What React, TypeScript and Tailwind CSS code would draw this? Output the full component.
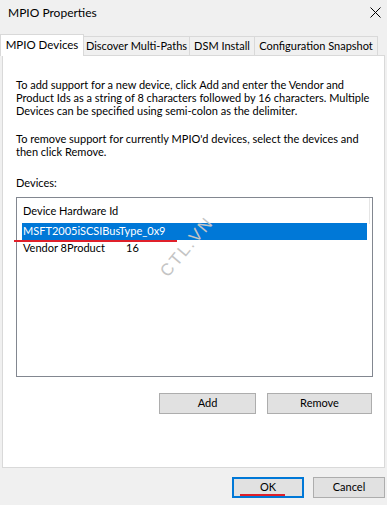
const tabs = [
  { label: 'Discover Multi-Paths', w: 'w-[107px]' },
  { label: 'DSM Install', w: 'w-[66px]' },
  { label: 'Configuration Snapshot', w: 'w-[124px]' },
]

const App = () => {
  return (
    <div
      className="relative h-[505px] w-[387px] overflow-hidden bg-[#f0f0f0] text-[11px] text-black"
      style={{ fontFamily: 'Lato, "Liberation Sans", sans-serif' }}
    >
      {/* title bar */}
      <div className="flex h-[25px] items-center justify-between pl-[8px] pr-[4px]">
        <span className="text-[12px] leading-none">MPIO Properties</span>
        <svg width="11" height="11" viewBox="0 0 11 11" className="mr-[2px]">
          <path d="M0.5 0.5 L10.5 10.5 M10.5 0.5 L0.5 10.5" stroke="#000" strokeWidth="1" />
        </svg>
      </div>

      {/* tabs */}
      <div className="mt-[9px] flex h-[21px] items-end whitespace-nowrap">
        <div className="relative z-10 -mb-px flex h-[22px] w-[84px] items-center justify-center border border-b-0 border-[#d9d9d9] bg-white pb-[1px] text-[11.5px]">
          MPIO Devices
        </div>
        {tabs.map((t) => (
          <div
            key={t.label}
            className={`-ml-px flex h-[19px] items-center justify-center border border-b-0 border-[#d9d9d9] bg-[#f0f0f0] ${t.w}`}
          >
            {t.label}
          </div>
        ))}
      </div>

      {/* panel */}
      <div className="ml-[2px] flex h-[413px] w-[383px] flex-col border border-[#d9d9d9] bg-white pl-[13px] pr-[11px] pt-[22px]">
        <p className="whitespace-nowrap leading-[13px]">
          To add support for a new device, click Add and enter the Vendor and
          <br />
          Product Ids as a string of 8 characters followed by 16 characters. Multiple
          <br />
          Devices can be specified using semi-colon as the delimiter.
        </p>
        <p className="mt-[15px] whitespace-nowrap leading-[13px]">
          To remove support for currently MPIO'd devices, select the devices and
          <br />
          then click Remove.
        </p>
        <p className="mt-[18px] leading-[13px]">Devices:</p>

        {/* list box */}
        <div className="relative mt-[8px] h-[180px] w-[357px] border border-[#828790] bg-white px-[5px] pt-[5px]">
          <div className="h-[20px] pl-[1px] leading-[16px]">Device Hardware Id</div>
          <div className="relative flex h-[17px] items-center bg-[#0078d7] pl-[1px] text-white">
            MSFT2005iSCSIBusType_0x9
            <div className="absolute left-[-8px] top-[17px] h-[2px] w-[163px] bg-[#e0202a]" />
          </div>
          <div className="flex h-[17px] items-center pl-[1px]">
            <span className="w-[103px]">Vendor 8Product</span>
            <span>16</span>
          </div>
          <div className="absolute right-[2px] top-0 h-[26px] w-px bg-[#e5e5e5]" />
          <div
            className="absolute left-[134px] top-[39px] -rotate-[50deg] whitespace-nowrap text-[17px] leading-[20px] tracking-[2px] text-[#c4c4c4]"
            style={{ fontFamily: '"Liberation Sans", sans-serif' }}
          >
            CTL.VN
          </div>
        </div>

        <div className="mt-[16px] flex justify-end gap-[11px] pr-[1px]">
          <button className="h-[21px] w-[97px] border border-[#adadad] bg-[#e1e1e1]">Add</button>
          <button className="h-[21px] w-[105px] border border-[#adadad] bg-[#e1e1e1]">Remove</button>
        </div>
      </div>

      {/* dialog buttons */}
      <div className="mt-[9px] flex justify-end gap-[9px] pr-[2px]">
        <button className="relative h-[21px] w-[72px] border-2 border-[#0078d7] bg-[#e1e1e1]">
          OK
          <div className="absolute left-[6px] top-[15px] h-[2px] w-[45px] bg-[#e0202a]" />
        </button>
        <button className="h-[21px] w-[72px] border border-[#adadad] bg-[#e1e1e1]">Cancel</button>
      </div>
    </div>
  )
}

export default App
